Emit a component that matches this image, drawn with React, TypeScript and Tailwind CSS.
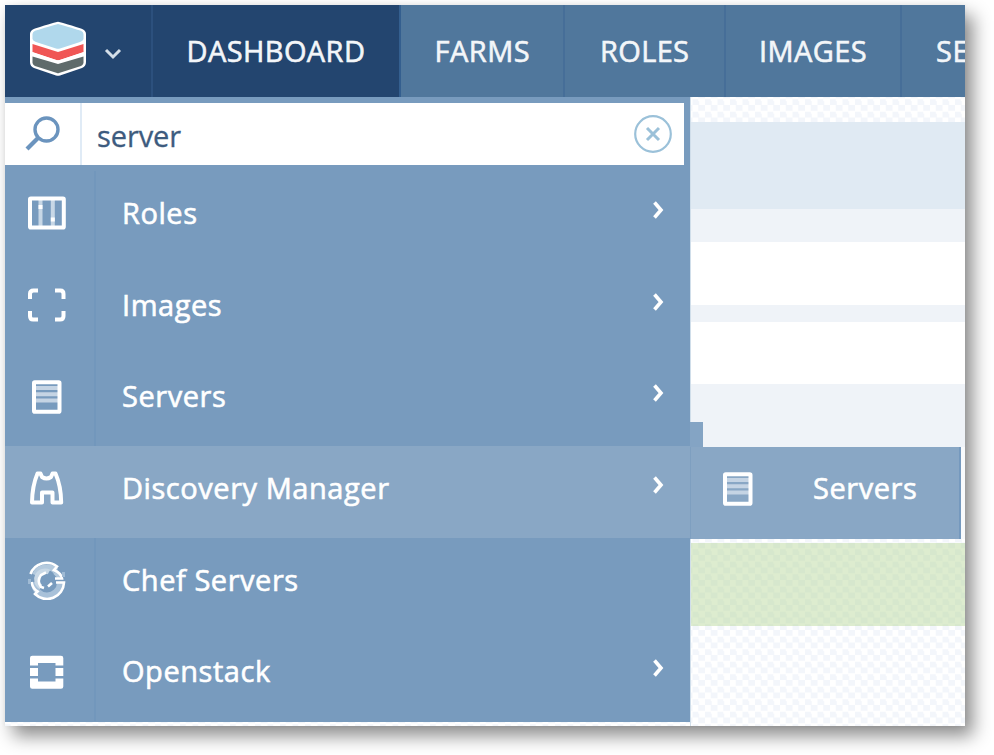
import type { ReactNode } from "react";

const FONT = "font-['Open_Sans','Noto_Sans',sans-serif]";

const checker =
  "bg-[repeating-conic-gradient(#f3f6fb_0_25%,#ffffff_0_50%)] bg-[length:12.5px_12.5px]";

function Logo() {
  return (
    <svg className="mb-1 ml-6 h-14 w-[58px] shrink-0" viewBox="0 0 58 56">
      <path d="M29 .8Q31 .8 52 7.600Q57 9.500 57 13V41Q57 45.500 53 47L31 54.500Q29 55.200 27 54.500L5 47Q1 45.500 1 41V13Q1 9.500 6 7.600Q27 .8 29 .8Z" fill="#fff" />
      <path d="M29 3Q30 3 52 9.800Q54.500 11 54.500 13V18Q54 20 51 21L31 27.500Q29 28 27 27.500L7 21Q4 20 3.500 18V13Q3.500 11 6 9.800Q28 3 29 3Z" fill="#b0d8ec" />
      <path d="M3.500 23L29 31L54.500 23V31L31 39Q29 39.700 27 39L3.500 31Z" fill="#f05655" />
      <path d="M3.500 35.500L29 43L54.500 35.500V42Q54 44 52 45L30 52Q29 52.500 28 52L6 45Q4 44 3.500 42Z" fill="#5f6b6b" />
      <path d="M3 32.500L27 40.200Q29 40.700 31 40.200L55 32.500" fill="none" stroke="#fff" strokeWidth="2.500" />
    </svg>
  );
}

function RolesIcon() {
  return (
    <svg className="h-10 w-10" viewBox="0 0 40 40" fill="none">
      <path d="M13.500 6V34M25.800 6V34" stroke="#c7d7e6" strokeWidth="4" />
      <rect x="3" y="5.500" width="33.800" height="29" rx=".8" stroke="#fff" strokeWidth="4" />
      <path d="M11.500 12h4v4h-4zM23.800 24.500h4v4h-4z" fill="#fff" />
    </svg>
  );
}

function ImagesIcon() {
  return (
    <svg className="h-10 w-10" viewBox="0 0 40 40" fill="none" stroke="#fff" strokeWidth="4">
      <path d="M3 14V9Q3 5.500 6.500 5.500H11M28 5.500H33.500Q36.500 5.500 36.500 9V14M36.500 26V31Q36.500 34.500 33 34.500H28M11 34.500H6Q3 34.500 3 31V26" />
    </svg>
  );
}

function ServersIcon() {
  return (
    <svg className="h-10 w-10" viewBox="0 0 40 40" fill="none">
      <path d="M7 11H33M7 17.200H33M7 23.500H33" stroke="#c5d4e4" strokeWidth="4" />
      <rect x="7" y="5.200" width="25.500" height="29.500" rx=".8" stroke="#fff" strokeWidth="4" />
    </svg>
  );
}

function DiscoveryIcon() {
  return (
    <svg className="h-10 w-10" viewBox="0 0 40 40" fill="none" stroke="#fff" strokeWidth="4">
      <path d="M10.500 5.500H13.500L15 9Q19.500 12 24 9L25.500 5.500H28.500Q34 18 34.200 34.500H25.500V24.500H15V34.500H5Q5.200 18 10.500 5.500Z" strokeLinejoin="round" />
    </svg>
  );
}

function ChefIcon() {
  return (
    <svg className="h-10 w-10" viewBox="0 0 40 40" fill="none">
      <path d="M8 15A13 13 0 0 1 29 11" stroke="#b4cade" strokeWidth="6" />
      <path d="M7 22A13 13 0 0 0 33 23" stroke="#a8c1d9" strokeWidth="6" />
      <path d="M28 12L33 17" stroke="#b4cade" strokeWidth="5" />
      <path d="M22 12A8.500 8.500 0 0 0 14 27" stroke="#c8d8e6" strokeWidth="5" />
      <path d="M3.500 14A17 17 0 0 1 30 6.500L27 10Q34 13 35 18.500H28" stroke="#fff" strokeWidth="2.600" />
      <path d="M4.500 22Q6 29 10.500 31.500L8 34A17 17 0 0 0 37 22.500H29" stroke="#fff" strokeWidth="2.600" />
      <path d="M19 12.500L14 15Q9.500 21 14 27L17 28M21 26.500L25 23" stroke="#fff" strokeWidth="2.600" />
      <path d="M2.500 19V24M36.500 12V17" stroke="#9fbad4" strokeWidth="3" />
    </svg>
  );
}

function OpenstackIcon() {
  return (
    <svg className="h-10 w-10" viewBox="0 0 40 40">
      <path d="M3 13.500V6Q3 3.800 5.200 3.800H34Q36.300 3.800 36.300 6V13.500H28.500V11H11V13.500ZM3 26.500H11V29.500H28.500V26.500H36.300V34.500Q36.300 36.700 34 36.700H5.200Q3 36.700 3 34.500Z" fill="#fff" />
      <path d="M3 16H11V24H3ZM28.500 16H36.300V24H28.500Z" fill="#fff" />
    </svg>
  );
}

function Chevron() {
  return (
    <svg className="mr-[26.500px] mb-[14px] h-[18px] w-3 shrink-0" viewBox="0 0 12 18" fill="none">
      <path d="M2.500 1.500L9 9L2.500 16.500" stroke="#fff" strokeWidth="3.600" />
    </svg>
  );
}

function NavItem({ label, width, pad, spacing, active }: { label: string; width: string; pad: string; spacing: string; active?: boolean }) {
  return (
    <div className={`flex h-full shrink-0 items-center border-r-2 ${width} ${pad} ${active ? "border-[#345f8f] bg-[#23456f]" : "border-[#466e98]"}`}>
      <span className={`mb-0.5 whitespace-nowrap text-[29px] leading-none text-[#f3f6f9] [-webkit-text-stroke:0.6px_#f3f6f9] ${spacing}`}>{label}</span>
    </div>
  );
}

function MenuItem({ label, icon, active, arrow = true }: { label: string; icon: ReactNode; active?: boolean; arrow?: boolean }) {
  return (
    <div className={`flex h-[91.700px] shrink-0 items-center ${active ? "bg-[#89a7c5]" : ""}`}>
      <div className={`flex h-full w-[91px] shrink-0 items-center border-r-2 pl-[22px] ${active ? "border-transparent" : "border-[#7297bc]"}`}>
        <div className="mb-[7px]">{icon}</div>
      </div>
      <span className="mb-[9px] ml-[26px] flex-1 whitespace-nowrap text-[29px] leading-none tracking-[0.550px] text-white [-webkit-text-stroke:0.6px_#ffffff]">{label}</span>
      {arrow && <Chevron />}
    </div>
  );
}

export default function App() {
  return (
    <div className={`h-[755px] w-[994px] overflow-hidden bg-white pt-[5px] pl-[5px] ${FONT}`}>
      <div className="h-[721px] w-[960px] shadow-[8px_10px_17px_0px_rgba(0,0,0,0.450),0_0_5px_rgba(0,0,0,0.060)]">
        <div className={`flex h-full w-full flex-col overflow-hidden ${checker}`}>
          <header className="flex h-[92px] shrink-0 overflow-hidden bg-[#50779c]">
            <div className="flex w-[148px] shrink-0 items-center border-r-2 border-[#2c507d] bg-[#23456f]">
              <Logo />
              <svg className="mt-1.5 ml-[17px] h-3 w-[18px]" viewBox="0 0 18 12" fill="none">
                <path d="M2 2L9 9L16 2" stroke="#d4dfe9" strokeWidth="3" />
              </svg>
            </div>
            <NavItem label="DASHBOARD" width="w-[248px]" pad="pl-[33.500px]" spacing="tracking-[0.400px]" active />
            <NavItem label="FARMS" width="w-[164px]" pad="pl-[33.500px]" spacing="tracking-[0.500px]" />
            <NavItem label="ROLES" width="w-[161px]" pad="pl-[35px]" spacing="tracking-[0.350px]" />
            <NavItem label="IMAGES" width="w-[176px]" pad="pl-[33px]" spacing="tracking-[0.400px]" />
            <NavItem label="SERVERS" width="w-[190px]" pad="pl-[34px]" spacing="tracking-[0.500px]" />
          </header>

          <div className="flex min-h-0 flex-1">
            <aside className="flex h-[625px] w-[685px] shrink-0 flex-col bg-[#789bbe]">
              <div className="mt-1.5 mb-1.5 flex h-[62px] w-[679px] shrink-0 items-center bg-white">
                <div className="flex h-full w-[77px] items-center border-r-2 border-[#e0ebf6] pl-5">
                  <svg className="h-9 w-9" viewBox="0 0 36 36" fill="none" stroke="#6b94be">
                    <circle cx="21.500" cy="13.500" r="11.500" strokeWidth="3.400" />
                    <path d="M13 22L2 33" strokeWidth="4.200" />
                  </svg>
                </div>
                <span className="mt-0.5 ml-[15px] flex-1 text-[29px] leading-none tracking-[-0.100px] text-[#3d5b7e] [-webkit-text-stroke:0.3px_#3d5b7e]">server</span>
                <svg className="mr-3 h-[38px] w-[38px]" viewBox="0 0 38 38" fill="none" stroke="#9bc1d9">
                  <circle cx="19" cy="19" r="17.800" strokeWidth="2.200" />
                  <path d="M13 13L25 25M25 13L13 25" strokeWidth="3" />
                </svg>
              </div>
              <MenuItem label="Roles" icon={<RolesIcon />} />
              <MenuItem label="Images" icon={<ImagesIcon />} />
              <MenuItem label="Servers" icon={<ServersIcon />} />
              <MenuItem label="Discovery Manager" icon={<DiscoveryIcon />} active />
              <MenuItem label="Chef Servers" icon={<ChefIcon />} arrow={false} />
              <MenuItem label="Openstack" icon={<OpenstackIcon />} />
            </aside>

            <main className="flex flex-1 flex-col border-l border-[#d0deea]">
              <div className="mt-[25px] h-[87px] bg-[#e0eaf3]" />
              <div className="h-[33px] bg-[#eff3f8]" />
              <div className="h-[63px] bg-white" />
              <div className="h-[17px] bg-[#eff3f8]" />
              <div className="h-[62px] bg-white" />
              <div className="h-[38px] bg-[#eff3f8]" />
              <div className="flex h-[25px] bg-[#eff3f8]">
                <div className="-ml-px w-[13px] bg-[#84a4c4]" />
              </div>
              <div className="flex h-[92px] bg-[#f8fafc]">
                <div className="-ml-px flex w-[271px] items-center border-r-2 border-l border-r-[#7599be] border-l-[#7e9fc0] bg-[#89a7c5]">
                  <div className="mb-2 ml-[27px]"><ServersIcon /></div>
                  <span className="mb-[11px] ml-[55px] text-[29px] leading-none tracking-[0.550px] text-white [-webkit-text-stroke:0.6px_#ffffff]">Servers</span>
                </div>
              </div>
              <div className="mt-1 h-[83px] bg-[#b4d594]/45" />
            </main>
          </div>
        </div>
      </div>
    </div>
  );
}
